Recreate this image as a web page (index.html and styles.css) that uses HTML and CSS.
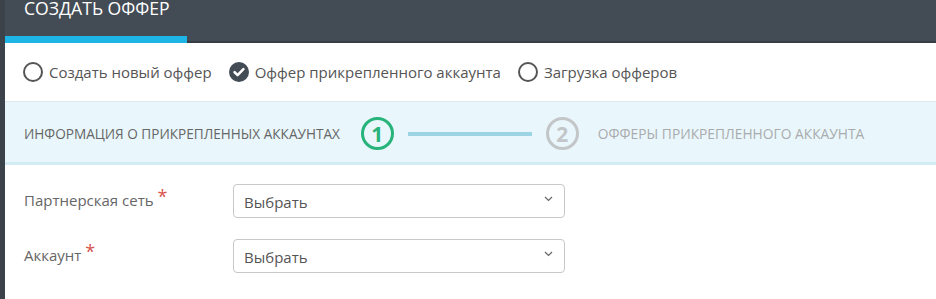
FILE: index.html
```html
<!DOCTYPE html>
<html lang="ru">
<head>
<meta charset="utf-8">
<link rel="stylesheet" href="styles.css">
</head>
<body>
<div class="page">
  <div class="topbar">
    <div class="tab">СОЗДАТЬ ОФФЕР</div>
  </div>
  <div class="radios">
    <label class="radio"><span class="circle"></span>Создать новый оффер</label>
    <label class="radio"><svg class="checked" width="20" height="20" viewBox="0 0 20 20"><circle cx="10" cy="10" r="10" fill="#434b54"/><path d="M5.6 10.2 L8.6 13.1 L14.4 7.2" fill="none" stroke="#fff" stroke-width="2.6" stroke-linecap="round" stroke-linejoin="round"/></svg>Оффер прикрепленного аккаунта</label>
    <label class="radio"><span class="circle"></span>Загрузка офферов</label>
  </div>
  <div class="steps">
    <span class="step-title">ИНФОРМАЦИЯ О ПРИКРЕПЛЕННЫХ АККАУНТАХ</span>
    <span class="num num-active">1</span>
    <span class="connector"></span>
    <span class="num num-idle">2</span>
    <span class="step-title step-idle">ОФФЕРЫ ПРИКРЕПЛЕННОГО АККАУНТА</span>
  </div>
  <div class="form">
    <div class="row">
      <div class="label">Партнерская сеть <span class="req">*</span></div>
      <div class="select">Выбрать<svg class="chev" width="9" height="6" viewBox="0 0 9 6"><path d="M1 1 L4.5 4.5 L8 1" fill="none" stroke="#666" stroke-width="1.2"/></svg></div>
    </div>
    <div class="row">
      <div class="label">Аккаунт <span class="req">*</span></div>
      <div class="select">Выбрать<svg class="chev" width="9" height="6" viewBox="0 0 9 6"><path d="M1 1 L4.5 4.5 L8 1" fill="none" stroke="#666" stroke-width="1.2"/></svg></div>
    </div>
  </div>
</div>
</body>
</html>
```
FILE: styles.css
```css
* { box-sizing: border-box; }
html, body { margin: 0; padding: 0; background: #fff; }
body { font-family: "Open Sans", "Noto Sans", sans-serif; color: #555; }
.page {
  border-left: 5px solid #3b424a;
  min-height: 299px;
}
.topbar {
  height: 43px;
  background: #434c55;
  border-bottom: 2px solid #363d44;
  display: flex;
  align-items: flex-start;
}
.tab {
  height: 43px;
  width: 182px;
  padding-left: 19px;
  padding-top: 1px;
  color: #fff;
  font-size: 17.6px;
  line-height: 15px;
  border-bottom: 7px solid #1eb5e6;
  margin-bottom: -2px;
}
.radios {
  height: 59px;
  display: flex;
  align-items: center;
  padding-left: 18px;
  border-bottom: 1px solid #dfe8ec;
  gap: 17px;
}
.radio {
  display: flex;
  align-items: center;
  font-size: 15px;
  color: #555;
  gap: 6px;
}
.circle {
  width: 20px;
  height: 20px;
  border: 2px solid #555;
  border-radius: 50%;
}
.steps {
  height: 63px;
  background: #e9f7fc;
  border-bottom: 3px solid #d3ecf4;
  display: flex;
  align-items: center;
  padding-left: 19px;
  padding-top: 3px;
}
.step-title {
  font-size: 13.6px;
  color: #666;
}
.step-idle { color: #a9abad; margin-left: 19px; font-size: 13.8px; }
.num {
  width: 33px;
  height: 33px;
  border-radius: 50%;
  border: 3px solid;
  display: flex;
  align-items: center;
  justify-content: center;
  font-size: 21px;
  font-weight: 700;
}
.num-active { border-color: #27b37a; color: #27b37a; margin-left: 21px; }
.num-idle { border-color: #c3c6c8; color: #c3c6c8; }
.connector {
  width: 124px;
  height: 4px;
  background: #9dd4e3;
  margin: 0 14px;
}
.form {
  padding: 19px 0 0 19px;
  display: flex;
  flex-direction: column;
  gap: 21px;
}
.row {
  display: flex;
  align-items: center;
}
.label {
  width: 209px;
  font-size: 15px;
  color: #666;
  margin-top: -4px;
}
.req { color: #d9534f; font-size: 18px; position: relative; top: -3px; }
.select {
  width: 332px;
  height: 34px;
  border: 1px solid #c8c8c8;
  border-radius: 4px;
  display: flex;
  align-items: center;
  justify-content: space-between;
  padding: 2px 11px 0 10px;
  font-size: 15px;
  color: #555;
}
.chev { margin-top: -7px; }
```
